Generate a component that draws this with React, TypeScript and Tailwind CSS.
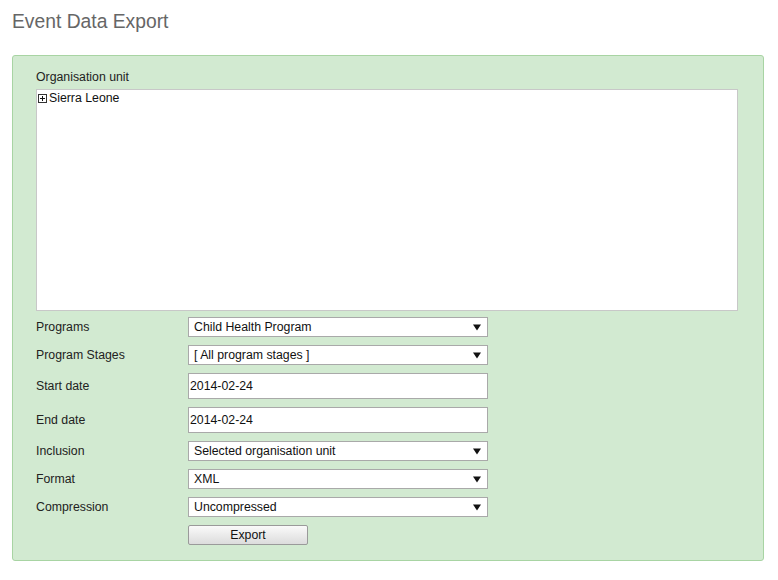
import React from 'react'

const font = { fontFamily: '"Liberation Sans", Arial, sans-serif' }

function Arrow() {
  return (
    <svg width="8" height="7" viewBox="0 0 8 7" className="shrink-0">
      <path d="M0 0.5 H8 L4 6.5 Z" fill="#111" />
    </svg>
  )
}

function SelectBox({ value }: { value: string }) {
  return (
    <div className="flex items-center justify-between w-[300px] h-[20px] bg-white border border-[#a9a9a9] pl-[5px] pr-[6px] text-[12.3px] text-[#111]">
      <span className="leading-none">{value}</span>
      <Arrow />
    </div>
  )
}

function DateBox({ value }: { value: string }) {
  return (
    <div className="flex items-center w-[300px] h-[26px] bg-white border border-[#a9a9a9] pl-[1px] text-[12.3px] text-[#111]">
      {value}
    </div>
  )
}

const ROWS: { label: string; kind: 'select' | 'date'; value: string }[] = [
  { label: 'Programs',       kind: 'select', value: 'Child Health Program' },
  { label: 'Program Stages', kind: 'select', value: '[ All program stages ]' },
  { label: 'Start date',     kind: 'date',   value: '2014-02-24' },
  { label: 'End date',       kind: 'date',   value: '2014-02-24' },
  { label: 'Inclusion',      kind: 'select', value: 'Selected organisation unit' },
  { label: 'Format',         kind: 'select', value: 'XML' },
  { label: 'Compression',    kind: 'select', value: 'Uncompressed' },
]

export default function App() {
  return (
    <div className="w-[778px] h-[580px] bg-white px-[12px] pt-[10px]" style={font}>
      <h1 className="text-[19.3px] leading-[23px] text-[#666] font-normal">Event Data Export</h1>

      {/* Export form panel */}
      <div className="mt-[22px] w-[752px] bg-[#d2ead1] border border-[#a8d4a3] rounded-[3px] pl-[23px] pt-[13px] pb-[15px]">
        <p className="text-[12.3px] leading-[16px] text-[#222]">Organisation unit</p>
        <div className="mt-[4px] w-[702px] h-[222px] bg-white border border-[#c8c8c8] pl-[1px] pt-[1px]">
          <div className="flex items-center gap-[2px] text-[12.3px] text-[#111] leading-[14px]">
            <svg width="9" height="9" viewBox="0 0 9 9">
              <rect x="0.5" y="0.5" width="8" height="8" fill="#fff" stroke="#333" />
              <path d="M2 4.5 H7 M4.5 2 V7" stroke="#111" />
            </svg>
            <span>Sierra Leone</span>
          </div>
        </div>

        <div className="mt-[6px] flex flex-col gap-[8px]">
          {ROWS.map(r => (
            <div key={r.label} className="flex items-center">
              <span className="w-[152px] text-[12.3px] text-[#222]">{r.label}</span>
              {r.kind === 'select' ? <SelectBox value={r.value} /> : <DateBox value={r.value} />}
            </div>
          ))}
          <div className="flex pl-[152px]">
            <button
              className="w-[120px] h-[20px] border border-[#9a9a9a] rounded-[2px] bg-gradient-to-b from-[#fafafa] to-[#dcdcdc] text-[12.3px] text-[#111] leading-none"
              style={font}>
              Export
            </button>
          </div>
        </div>
      </div>
    </div>
  )
}
